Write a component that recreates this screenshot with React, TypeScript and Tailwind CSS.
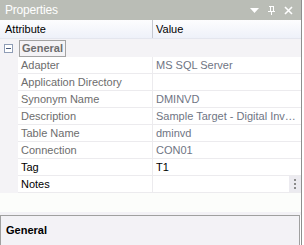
type Row = { name: string; value: string; readOnly: boolean; button?: boolean };

const rows: Row[] = [
  { name: "Adapter", value: "MS SQL Server", readOnly: true },
  { name: "Application Directory", value: "", readOnly: true },
  { name: "Synonym Name", value: "DMINVD", readOnly: true },
  { name: "Description", value: "Sample Target - Digital Inv…", readOnly: true },
  { name: "Table Name", value: "dminvd", readOnly: true },
  { name: "Connection", value: "CON01", readOnly: true },
  { name: "Tag", value: "T1", readOnly: false },
  { name: "Notes", value: "", readOnly: false, button: true },
];

function PinIcon() {
  return (
    <svg width="9" height="10" viewBox="0 0 9 10">
      <path d="M2 1h5M3 1v5M6 1v5M1 6h7M4.5 6v4" stroke="white" strokeWidth="1" fill="none" shapeRendering="crispEdges" />
    </svg>
  );
}

function CloseIcon() {
  return (
    <svg width="9" height="9" viewBox="0 0 9 9">
      <path d="M1 1l7 7M8 1l-7 7" stroke="white" strokeWidth="1.6" fill="none" />
    </svg>
  );
}

export default function App() {
  return (
    <div className="flex h-[245px] w-[304px] bg-white font-['Liberation_Sans',Arial,sans-serif] text-[11px]">
      <div className="flex w-[302px] flex-col border-r border-[#8e8e8e]">
        <div className="flex h-[20px] shrink-0 items-center justify-between bg-[#babdb6] pl-[5px] pr-[8px]">
          <span className="text-[12px] tracking-[-0.2px] text-white">Properties</span>
          <div className="flex items-center gap-[8px]">
            <svg width="9" height="5" viewBox="0 0 9 5">
              <path d="M0 0h9L4.5 5z" fill="white" />
            </svg>
            <PinIcon />
            <CloseIcon />
          </div>
        </div>
        <div className="flex h-[19px] shrink-0 border-b border-[#e4e6ee] bg-gradient-to-b from-[#fdfdfe] to-[#eef1f9] text-black">
          <div className="flex w-[153px] shrink-0 items-center border-r border-[#c5c8d0] pl-[5px]">Attribute</div>
          <div className="flex items-center pl-[3px]">Value</div>
        </div>
        <div className="flex h-[18px] shrink-0 items-center bg-[#f4f3f6]">
          <div className="ml-[4px] flex h-[9px] w-[9px] items-center justify-center border border-[#8f9db6] bg-white">
            <div className="h-px w-[5px] bg-[#4a5b7c]" />
          </div>
          <div className="ml-[6px] flex h-[17px] items-center border border-[#a3a3a3] px-[2px] pt-px font-bold text-[#6d6d6d]">
            General
          </div>
        </div>
        <div className="flex shrink-0">
          <div className="w-[18px] shrink-0 bg-[#f4f3f6]" />
          <div className="min-w-0 flex-1">
            {rows.map((r) => (
              <div key={r.name} className="flex h-[17px] border-b border-[#ecebee]">
                <div
                  className={`flex w-[135px] shrink-0 items-center border-r border-[#ecebee] pl-[3px] pt-px ${r.readOnly ? "text-[#6d6d6d]" : "text-black"}`}
                >
                  {r.name}
                </div>
                <div
                  className={`flex min-w-0 flex-1 items-center pl-[3px] ${r.readOnly ? "text-[#6f7584]" : "text-black"}`}
                >
                  <span className="min-w-0 flex-1 whitespace-nowrap pt-px">{r.value}</span>
                  {r.button ? (
                    <div className="flex h-[16px] w-[12px] shrink-0 flex-col items-center justify-center gap-[2px] bg-[#ecebf0]">
                      <div className="h-[2px] w-[2px] bg-[#8a8a8a]" />
                      <div className="h-[2px] w-[2px] bg-[#8a8a8a]" />
                      <div className="h-[2px] w-[2px] bg-[#8a8a8a]" />
                    </div>
                  ) : null}
                </div>
              </div>
            ))}
          </div>
        </div>
        <div className="h-[19px] shrink-0 bg-[#fcfdfb]" />
        <div className="h-[3px] shrink-0 bg-[#f3f2f6]" />
        <div className="mr-[1px] flex-1 border border-b-0 border-[#a0a0a0] bg-[#f3f2f6] pl-[5px] pt-[6px]">
          <span className="font-bold text-black">General</span>
        </div>
      </div>
    </div>
  );
}
